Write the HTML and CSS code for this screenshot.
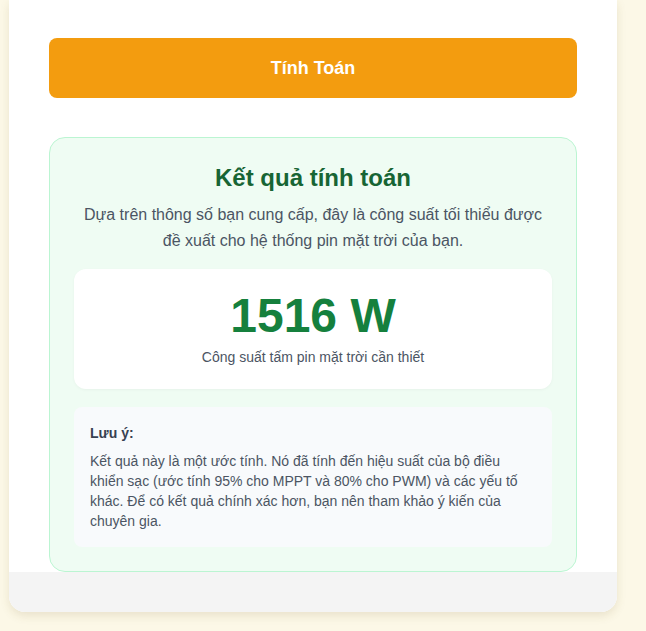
FILE: index.html
```html
<!DOCTYPE html>
<html lang="vi">
<head>
<meta charset="utf-8">
<title>Tính công suất pin mặt trời</title>
<link rel="stylesheet" href="styles.css">
</head>
<body>
  <div class="card">
    <div class="card-body">
      <button class="calc-btn" type="button">Tính Toán</button>
      <section class="result">
        <h2 class="result-title">Kết quả tính toán</h2>
        <p class="result-desc">Dựa trên thông số bạn cung cấp, đây là công suất tối thiểu được đề xuất cho hệ thống pin mặt trời của bạn.</p>
        <div class="value-box">
          <div class="value">1516 W</div>
          <div class="value-label">Công suất tấm pin mặt trời cần thiết</div>
        </div>
        <div class="note">
          <div class="note-title">Lưu ý:</div>
          <p class="note-text">Kết quả này là một ước tính. Nó đã tính đến hiệu suất của bộ điều khiển sạc (ước tính 95% cho MPPT và 80% cho PWM) và các yếu tố khác. Để có kết quả chính xác hơn, bạn nên tham khảo ý kiến của chuyên gia.</p>
        </div>
      </section>
    </div>
    <footer class="card-footer"></footer>
  </div>
</body>
</html>
```
FILE: styles.css
```css
html, body {
  margin: 0;
  padding: 0;
}
body {
  background: #fcf8e7;
  font-family: "Liberation Sans", Arial, sans-serif;
  padding: 0 29px 19px 9px;
  overflow: hidden;
}
.card {
  width: 608px;
  background: #ffffff;
  border-radius: 0 0 16px 16px;
  box-shadow: 0 4px 10px rgba(120, 100, 40, 0.14);
  overflow: hidden;
}
.card-body {
  padding: 38px 40px 0 40px;
  display: flex;
  flex-direction: column;
}
.calc-btn {
  height: 60px;
  border: none;
  border-radius: 8px;
  background: #f39c0f;
  color: #ffffff;
  font-family: inherit;
  font-size: 18px;
  font-weight: bold;
  cursor: pointer;
}
.result {
  margin-top: 39px;
  background: #effcf3;
  border: 1px solid #bbf5d2;
  border-radius: 16px;
  padding: 24px;
  text-align: center;
}
.result-title {
  margin: 0;
  font-size: 24px;
  line-height: 32px;
  font-weight: bold;
  color: #176534;
}
.result-desc {
  margin: 8px 0 0;
  font-size: 16px;
  line-height: 26px;
  color: #4b5563;
}
.value-box {
  margin-top: 15px;
  background: #ffffff;
  border-radius: 12px;
  padding: 23px 24px 22px;
  box-shadow: 0 1px 3px rgba(0, 0, 0, 0.04);
}
.value {
  font-size: 48px;
  line-height: 48px;
  font-weight: bold;
  color: #15803d;
}
.value-label {
  margin-top: 7px;
  font-size: 14px;
  line-height: 20px;
  color: #4b5563;
}
.note {
  margin-top: 18px;
  background: #f8fafc;
  border-radius: 8px;
  padding: 16px;
  text-align: left;
}
.note-title {
  font-size: 14px;
  line-height: 20px;
  font-weight: bold;
  color: #374151;
}
.note-text {
  margin: 8px 0 0;
  font-size: 14px;
  line-height: 20px;
  color: #4b5563;
}
.card-footer {
  height: 40px;
  background: #f4f4f4;
}
```
